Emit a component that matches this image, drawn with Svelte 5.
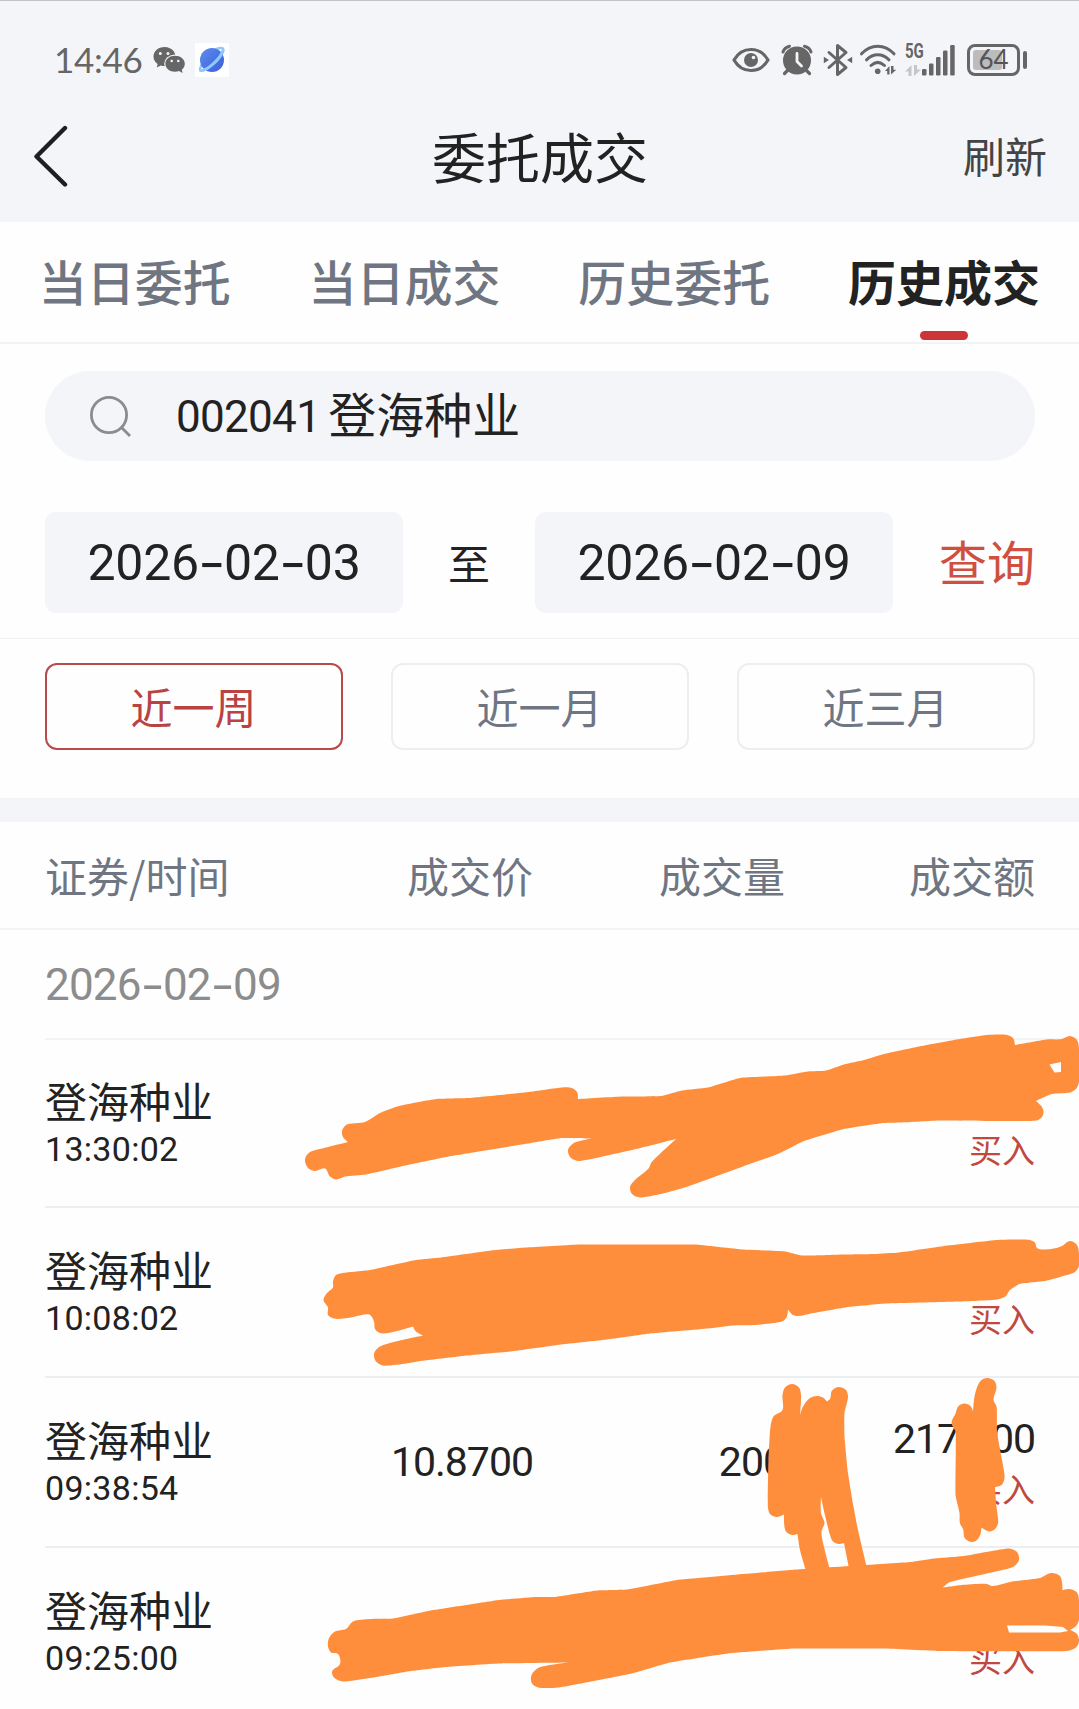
<script>
    const tabs = ['当日委托', '当日成交', '历史委托', '历史成交'];
    const ranges = ['近一周', '近一月', '近三月'];
    const startDate = '2026-02-03';
    const endDate = '2026-02-09';

    const deals = [
        { name: '登海种业', time: '13:30:02', price: '', amount: '', total: '', side: '买入' },
        { name: '登海种业', time: '10:08:02', price: '', amount: '', total: '.00', side: '买入' },
        { name: '登海种业', time: '09:38:54', price: '10.8700', amount: '200', total: '2174.00', side: '买入' },
        { name: '登海种业', time: '09:25:00', price: '', amount: '', total: '', side: '买入' },
    ];

    let activeTab = 3;
    let activeRange = 0;

    // outlines of the marker strokes, x y pairs
    const strokes = [
        '305 1159 310 1152 320 1149 348 1142 343 1137 342 1131 346 1125 365 1122 380 1113 399 1106 436 1099 469 1098 529 1092 562 1087.5 572 1088 577 1092 578 1099 622 1096.5 661 1096 682 1090.5 708 1087.5 740 1078 785 1075.5 808 1071.5 826 1070.5 844 1064.5 864 1060 884 1054 919 1046.5 954 1040 987 1035 1007 1035 1013 1038 1015 1045 1047 1039.5 1062 1039 1070 1036 1077 1040 1079 1048 1079 1082 1076 1089 1070 1092.5 1052 1094 1036 1101 1042 1107 1043.5 1112 1042 1117 1037 1120.5 939 1120.5 901 1122.5 884 1123 844 1129 803 1141.5 778 1154 743 1166.500 688 1186.5 667 1192.5 640 1197.5 632 1194 630 1187 635 1180 649 1168 651 1163 676 1139 632 1150 579 1161 571 1158 568 1150 574 1143 592 1138.5 562 1138 531 1143 451 1156 401 1166.5 366 1174.5 345 1176.5 336 1179.5 330 1176.5 325 1168.5 315 1171 308 1168',
        '333 1281.5 336 1275 343 1273 370 1270 416 1260 441 1257.5 491 1250.5 526 1247.5 579 1244.5 695 1244.5 743 1249.5 785 1251.5 802 1255.5 844 1254.5 874 1254 899 1252.5 944 1246 997 1240 1030 1240 1035 1242.5 1037 1248 1051 1249 1062 1246 1070 1241 1077 1245 1079 1253 1079 1266 1075 1272 1067 1275 1045 1281 1019.5 1284 1015 1286.5 1009.5 1290.5 1006 1296 997 1299.5 959 1301.5 886 1303.5 848 1307 811 1313.5 798 1316 793 1315 788 1309.5 787 1316.5 783 1321 755 1325 733 1325.5 708 1328.5 650 1333.5 607 1339.5 557 1345 511 1351.5 463 1356 421 1361 406 1363.5 383 1365.5 376 1361.5 374 1353.5 380 1346.5 400 1340.5 423 1335.5 416 1331.5 413 1326.5 393 1332 380 1333 375 1329 374 1321.5 369.5 1314.5 348 1318 334 1318.5 328 1315 328 1307.5 323.5 1300 327 1293 333 1287.5',
        '782.5 1410 782.5 1395 785 1387.5 792 1384 799 1387.5 801 1395 800 1415 803 1406.5 810 1398 817 1396 823 1397.5 827 1401.5 830 1399 832 1390.5 839 1387 846 1390 848 1396.5 844.5 1413 844.5 1436.5 848 1473 853.5 1506.5 858 1530 867 1568 849 1568 844 1543 839 1544 833 1541.5 830 1535 825 1515 821 1497 821 1513.5 824.5 1523 821.5 1531.5 824 1547 830 1570 806 1571 800 1550 797.5 1534 792 1535 786 1531.5 784.5 1527 784 1514.5 776.5 1517 770 1514 768 1508 768.5 1460 770.5 1426.5 773.5 1416.5',
        '955.5 1413.5 958.5 1406 964.5 1403.5 970.5 1406 973 1411.5 974.5 1396.5 978 1385 981.5 1380 987.5 1378 994.5 1381 996.5 1387.5 993.5 1400 996.5 1406.5 997 1431.5 1002 1460 1004.5 1478.5 1001.5 1485 995 1487 996.5 1506.5 998 1523.5 995 1529 989.5 1531.5 981.5 1527.5 980.5 1534 977 1540 972 1542 965 1538.5 963 1529 960 1523.5 959.5 1513 955.5 1495 955.5 1431.5 951.5 1423',
        '328 1646.5 329 1638 335 1631.5 346 1629 353 1621.5 370 1619 393 1618.5 428 1611 499 1600 536 1597 554 1597 597 1590.5 627 1589.5 677 1580 743 1574 803 1569 866 1565 911 1562 934 1558.5 964 1556 1009.5 1548.5 1017 1552 1019 1560 1014.5 1566 1007 1569 949 1582.5 943 1587.5 962 1585 987 1584 992 1586 1012 1581.5 1040 1578 1051 1573 1060 1576 1062.5 1590 1070 1589 1077 1592.5 1079 1600 1079 1620 1076 1626 1070 1630 1077 1634 1079 1641.5 1076 1647.5 1067 1651 939 1651 884 1648.5 793 1648.5 728 1653.5 670 1662.5 632 1673.5 559 1687.5 538 1687.5 532 1683.5 531.5 1675 539 1667.5 568 1662.5 499 1663.5 446 1667 411 1671 385 1675.5 343 1681.5 334 1677.5 332 1671.5 340 1664 338 1654 331 1652.5',
    ];

    const gaps = [
        'M1049.5 1064.5 1061 1062v10l-6.500.5z',
        'M1007 1625.500 1009 1632.500H1060L1068 1631 1063 1627 1045 1625.500z',
    ];

    // closed curve through the points, sharp turns stay sharp
    function smooth(outline) {
        const n = outline.split(' ').map(Number);
        const pts = [];
        for (let i = 0; i < n.length; i += 2) pts.push([n[i], n[i + 1]]);
        const at = (i) => pts[(i + pts.length) % pts.length];
        const len = (a, b) => Math.hypot(b[0] - a[0], b[1] - a[1]);
        const dir = (i) => {
            const a = at(i - 1), b = at(i), c = at(i + 1);
            const dot = (b[0] - a[0]) * (c[0] - b[0]) + (b[1] - a[1]) * (c[1] - b[1]);
            if (dot < len(a, b) * len(b, c) * 0.3) return [0, 0];
            const x = (b[0] - a[0]) / len(a, b) + (c[0] - b[0]) / len(b, c);
            const y = (b[1] - a[1]) / len(a, b) + (c[1] - b[1]) / len(b, c);
            const l = Math.hypot(x, y);
            return [x / l, y / l];
        };
        let d = 'M' + pts[0].join(' ');
        for (let i = 0; i < pts.length; i++) {
            const a = at(i), b = at(i + 1);
            const h = Math.min(len(a, b) * 0.3, 4);
            const s = dir(i), e = dir(i + 1);
            d += `C${a[0] + s[0] * h} ${a[1] + s[1] * h} ${b[0] - e[0] * h} ${b[1] - e[1] * h} ${b[0]} ${b[1]}`;
        }
        return d + 'z';
    }
</script>

{#snippet date(value)}
    {#each value.split('-') as part, i}{#if i > 0}<span class="dash">-</span>{/if}{part}{/each}
{/snippet}

<div class="page">
    <header>
        <div class="status">
            <span class="clock">14:46</span>
            <svg class="wechat" width="34" height="28" viewBox="0 0 34 28">
                <path fill="#666" d="M11.500 1C5.300 1 .5 5.200 .5 10.600c0 3.100 1.600 5.600 4.100 7.400L3.800 21.500l4-2c4 1.300 11 .5 13.500-3.500 2-3.500 1.500-7.500-.4-10.500C18.800 2.600 15.300 1 11.500 1z"/>
                <ellipse cx="22" cy="17.800" rx="10.800" ry="9.200" fill="#f4f5f9"/>
                <path fill="#666" d="M22 9.700c-5.400 0-9.600 3.500-9.600 8s4.200 8 9.600 8c1.400 0 2.800-.2 4-.7l3.600 2-.8-3.300c1.900-1.500 3-3.600 3-6 0-4.500-4.400-8-9.800-8z"/>
                <g fill="#f4f5f9">
                    <circle cx="7.300" cy="7.600" r="1.500"/>
                    <circle cx="15" cy="7.600" r="1.500"/>
                    <circle cx="18.700" cy="15" r="1.300"/>
                    <circle cx="25.300" cy="15" r="1.300"/>
                </g>
            </svg>
            <svg class="planet" width="34" height="34" viewBox="0 0 34 34">
                <defs>
                    <linearGradient id="globe" x1="0" y1="0" x2="1" y2="1">
                        <stop offset="0" stop-color="#5b8cf0"/>
                        <stop offset="1" stop-color="#3c5fd8"/>
                    </linearGradient>
                </defs>
                <rect width="34" height="34" fill="#fff"/>
                <path d="M20 6.500C24 5 28 4.300 28.300 6.200c.4 2-1.300 5-4 8.300M8 20c-2.500 3.500-3.500 6.500-2.500 7.800" fill="none" stroke="#8fc8fb" stroke-width="2.500"/>
                <circle cx="17" cy="17" r="12" fill="url(#globe)"/>
                <path d="M5.800 27.500C11 28 25.500 16.500 28 7.500" fill="none" stroke="#8fc8fb" stroke-width="3" stroke-linecap="round"/>
            </svg>
            <span class="fill"></span>
            <svg class="eye" width="38" height="26" viewBox="0 0 38 26">
                <path d="M2 13C6 6 12 2.500 19 2.500S32 6 36 13c-4 7-10 10.500-17 10.500S6 20 2 13z" fill="none" stroke="#666" stroke-width="3.200" stroke-linejoin="round"/>
                <circle cx="19" cy="13" r="7" fill="#666"/>
                <circle cx="21.500" cy="10.500" r="1.800" fill="#f4f5f9"/>
            </svg>
            <svg class="alarm" width="32" height="32" viewBox="0 0 32 32">
                <g fill="none" stroke="#666" stroke-linecap="round">
                    <path d="M2 8C3 5 5 3 8.500 2.200M30 8c-1-3-3-5-6.500-5.800" stroke-width="3"/>
                    <path d="M6.500 26.500 3.500 29.500M25.500 26.500l3 3" stroke-width="3.200"/>
                </g>
                <circle cx="16" cy="16.500" r="14" fill="#666"/>
                <path d="M16 9.500v8l4.500 4.500" fill="none" stroke="#f4f5f9" stroke-width="2.800" stroke-linecap="round" stroke-linejoin="round"/>
            </svg>
            <svg class="bluetooth" width="30" height="34" viewBox="0 0 30 34">
                <path d="M6 9.500 23 24.500 14.500 31.500V2.500L23 9.500 6 24.500" fill="none" stroke="#666" stroke-width="3" stroke-linejoin="round" stroke-linecap="round"/>
                <path d="M.8 13.800 6 17 .8 20.200zM29.200 13.800 24 17l5.200 3.200z" fill="#666"/>
            </svg>
            <svg class="wifi" width="38" height="32" viewBox="0 0 38 32">
                <g fill="none" stroke="#666" stroke-width="3" stroke-linecap="round">
                    <path d="M2.500 9.800C12-.3 25.500-.3 35 9.800"/>
                    <path d="M7.500 15.800c7-6.600 15.500-6.600 22.500 0"/>
                    <path d="M12 21.500c4.500-4.200 9-4.200 13.500 0"/>
                </g>
                <circle cx="18.700" cy="27.300" r="2.800" fill="#666"/>
                <path d="M26 27l4.500-5v8.500h-2.300V27zM32 22v8.500l5.300-4.700h-2.800V22z" fill="#666"/>
            </svg>
            <div class="cell">
                <span>5G</span>
                <svg width="16" height="11" viewBox="0 0 16 11">
                    <path d="M0 6.500 6.500 0v11H3.500V6.500zM9 0v11l7-6.500h-4V0z" fill="#c6c6ca"/>
                </svg>
            </div>
            <svg class="bars" width="34" height="32" viewBox="0 0 34 32">
                <g fill="#666">
                    <rect x="0" y="25" width="4.500" height="6.500" rx="1.200"/>
                    <rect x="7" y="19.500" width="4.500" height="12" rx="1.200"/>
                    <rect x="14" y="13" width="4.500" height="18.500" rx="1.200"/>
                    <rect x="21" y="6.500" width="4.500" height="25" rx="1.200"/>
                    <rect x="28.200" y="1" width="4.500" height="30.500" rx="1.200"/>
                </g>
            </svg>
            <div class="battery">
                <div class="body"><i class="level"></i><span>64</span></div>
                <i class="tip"></i>
            </div>
        </div>
        <div class="nav">
            <svg width="36" height="64" viewBox="0 0 36 64">
                <path d="M32 3 3.500 31.500l28.500 28" fill="none" stroke="#1f1f1f" stroke-width="4.400" stroke-linecap="round" stroke-linejoin="round"/>
            </svg>
            <h1>委托成交</h1>
            <span class="refresh">刷新</span>
        </div>
    </header>

    <div class="tabs">
        {#each tabs as tab, i}
            <div class="tab" class:active={i === activeTab}>{tab}</div>
        {/each}
    </div>

    <div class="search">
        <svg width="44" height="44" viewBox="0 0 44 44">
            <circle cx="20" cy="21" r="17.600" fill="none" stroke="#8c8c8c" stroke-width="2.800"/>
            <path d="M32 33l9 9" stroke="#8c8c8c" stroke-width="2.800"/>
        </svg>
        <span class="num code">002041</span>
        <span class="stock">登海种业</span>
    </div>

    <div class="dates">
        <div class="date num">{@render date(startDate)}</div>
        <span class="to">至</span>
        <div class="date num">{@render date(endDate)}</div>
        <span class="query">查询</span>
    </div>

    <div class="ranges">
        {#each ranges as range, i}
            <div class="range" class:active={i === activeRange}>{range}</div>
        {/each}
    </div>

    <div class="thead">
        <span>证券/时间</span>
        <span>成交价</span>
        <span>成交量</span>
        <span>成交额</span>
    </div>

    <div class="day num">{@render date('2026-02-09')}</div>

    {#each deals as deal}
        <div class="deal">
            <div class="who">
                <span class="name">{deal.name}</span>
                <span class="num time">{deal.time}</span>
            </div>
            <span class="num val">{deal.price}</span>
            <span class="num val">{deal.amount}</span>
            <div class="total">
                <span class="num val">{deal.total}</span>
                <span class="side">{deal.side}</span>
            </div>
        </div>
    {/each}

    <!-- hand-drawn marker over the private figures -->
    <svg class="marker" width="1079" height="1709" viewBox="0 0 1079 1709">
        {#each strokes as outline}
            <path d={smooth(outline)} fill="#ff8e3c"/>
        {/each}
        {#each gaps as d}
            <path {d} fill="#fefefe"/>
        {/each}
    </svg>
</div>

<style>
    :global(body) {
        margin: 0;
        background: #fefefe;
    }

    .page {
        position: relative;
        width: 1079px;
        height: 1709px;
        overflow: hidden;
        background: #fefefe;
        color: #222;
        font-family: "Noto Sans CJK SC", sans-serif;
    }

    .num {
        font-family: Roboto, "Noto Sans CJK SC", sans-serif;
    }

    .dash {
        display: inline-block;
        width: .505em;
        font-family: Inter, sans-serif;
        line-height: 1;
        text-align: center;
        transform: translateY(1px) scaleX(1.2);
    }

    header {
        box-sizing: border-box;
        height: 222px;
        border-top: 1px solid #c3c3c8;
        background: #f4f5f9;
    }

    .status {
        display: flex;
        align-items: center;
        box-sizing: border-box;
        height: 118px;
        padding: 0 52px 0 54px;
    }

    .clock {
        width: 99px;
        padding-bottom: 2px;
        color: #666;
        font: 35px/40px Lato, sans-serif;
        letter-spacing: -.3px;
    }

    .planet { margin-left: 8px; }
    .fill { flex: 1; }
    .alarm { margin-left: 11px; }
    .bluetooth { margin-left: 10px; }
    .wifi { margin-left: 6px; }

    .cell {
        display: flex;
        flex-direction: column;
        justify-content: space-between;
        width: 17px;
        height: 31px;
        margin-left: 8px;
        color: #666;
        font: bold 20px/12px Roboto, sans-serif;
    }

    .cell span {
        transform: scaleX(.75);
        transform-origin: left;
    }

    .battery {
        display: flex;
        align-items: center;
        gap: 3px;
        margin-left: 11px;
    }

    .battery .body {
        position: relative;
        box-sizing: border-box;
        width: 53px;
        height: 32px;
        border: 3px solid #666;
        border-radius: 8px;
        color: #555;
        font: 26px/24px Lato, sans-serif;
        text-align: center;
    }

    .battery span {
        position: relative;
    }

    .level {
        position: absolute;
        left: 3px;
        top: 3px;
        width: 29px;
        height: 20px;
        border-radius: 3px;
        background: #bcbcbf;
    }

    .tip {
        width: 4px;
        height: 18px;
        border-radius: 2px;
        background: #666;
    }

    .nav {
        display: grid;
        grid-template-columns: 100px 1fr 100px;
        align-items: center;
        height: 76px;
        padding: 0 32px 0 33px;
    }

    h1 {
        margin: 0;
        padding-bottom: 3px;
        font-size: 54px;
        font-weight: 400;
        line-height: 73px;
        text-align: center;
    }

    .refresh {
        padding-bottom: 6px;
        color: #444;
        font-size: 42px;
        text-align: right;
    }

    .tabs {
        display: grid;
        grid-template-columns: repeat(4, 1fr);
        height: 120px;
        border-bottom: 2px solid #f2f3f5;
    }

    .tab {
        position: relative;
        color: #6f7682;
        font-size: 48px;
        font-weight: 500;
        line-height: 117px;
        text-align: center;
    }

    .tab.active {
        color: #222;
        font-weight: 700;
    }

    .tab.active::after {
        content: "";
        position: absolute;
        left: 50%;
        bottom: 2px;
        width: 48px;
        height: 9px;
        margin-left: -24px;
        border-radius: 5px;
        background: #cc3437;
    }

    .search {
        display: flex;
        align-items: center;
        box-sizing: border-box;
        height: 90px;
        margin: 27px 44.5px 0;
        padding-left: 44.5px;
        border-radius: 45px;
        background: #f4f5f9;
    }

    .code {
        margin-left: 43px;
        padding-top: 2px;
        font-size: 44px;
        letter-spacing: -.7px;
    }

    .stock {
        margin-left: 8px;
        font-size: 48px;
        line-height: 83px;
        height: 90px;
    }

    .dates {
        display: flex;
        align-items: center;
        height: 101px;
        padding: 51px 44px 25px 45px;
        border-bottom: 1px solid #f1f2f4;
    }

    .date {
        width: 358px;
        border-radius: 11px;
        background: #f4f5f9;
        font-size: 50px;
        letter-spacing: -.3px;
        line-height: 103px;
        height: 101px;
        text-align: center;
    }

    .to {
        width: 132px;
        padding-bottom: 3px;
        font-size: 42px;
        text-align: center;
    }

    .query {
        flex: 1;
        padding-bottom: 6px;
        color: #cf5041;
        font-size: 48px;
        text-align: right;
    }

    .ranges {
        display: grid;
        grid-template-columns: repeat(3, 1fr);
        gap: 48px;
        padding: 24px 44.5px 48px;
        border-bottom: 24px solid #f4f5f9;
    }

    .range {
        box-sizing: border-box;
        height: 87px;
        border: 2px solid #eceef0;
        border-radius: 12px;
        color: #6f7682;
        font-size: 42px;
        line-height: 82px;
        text-align: center;
    }

    .range.active {
        border-color: #b9494a;
        color: #b94343;
    }

    .thead, .deal {
        display: grid;
        grid-template-columns: 238px 250px 252px 250px;
        align-items: center;
    }

    .thead {
        height: 106px;
        padding: 0 44px 0 45px;
        border-bottom: 2px solid #f3f4f7;
        color: #6f7682;
        font-size: 42px;
        line-height: 105px;
        text-align: right;
    }

    .thead span {
        height: 106px;
    }

    .thead span:first-child {
        text-align: left;
    }

    .day {
        height: 108px;
        margin-left: 45px;
        border-bottom: 2px solid #f3f4f7;
        color: #8c8c8c;
        font-size: 44px;
        letter-spacing: -.8px;
        line-height: 110px;
    }

    .deal {
        box-sizing: border-box;
        height: 170px;
        margin-left: 45px;
        padding-right: 45px;
        border-bottom: 2px solid #edeef1;
        text-align: right;
    }

    .day + .deal {
        height: 168px;
    }

    .who {
        display: flex;
        flex-direction: column;
        text-align: left;
    }

    .name {
        font-size: 42px;
        line-height: 53px;
    }

    .time {
        font-size: 34px;
        letter-spacing: .3px;
        line-height: 47px;
    }

    .day + .deal .who {
        padding-bottom: 1px;
    }

    .val {
        font-size: 41px;
        letter-spacing: -1px;
        line-height: 50px;
    }

    .total {
        display: flex;
        flex-direction: column;
        padding-top: 1px;
    }

    .total .val {
        height: 50px;
    }

    .side {
        color: #c0483f;
        font-size: 33px;
        line-height: 48px;
    }

    .marker {
        position: absolute;
        left: 0;
        top: 0;
    }
</style>
